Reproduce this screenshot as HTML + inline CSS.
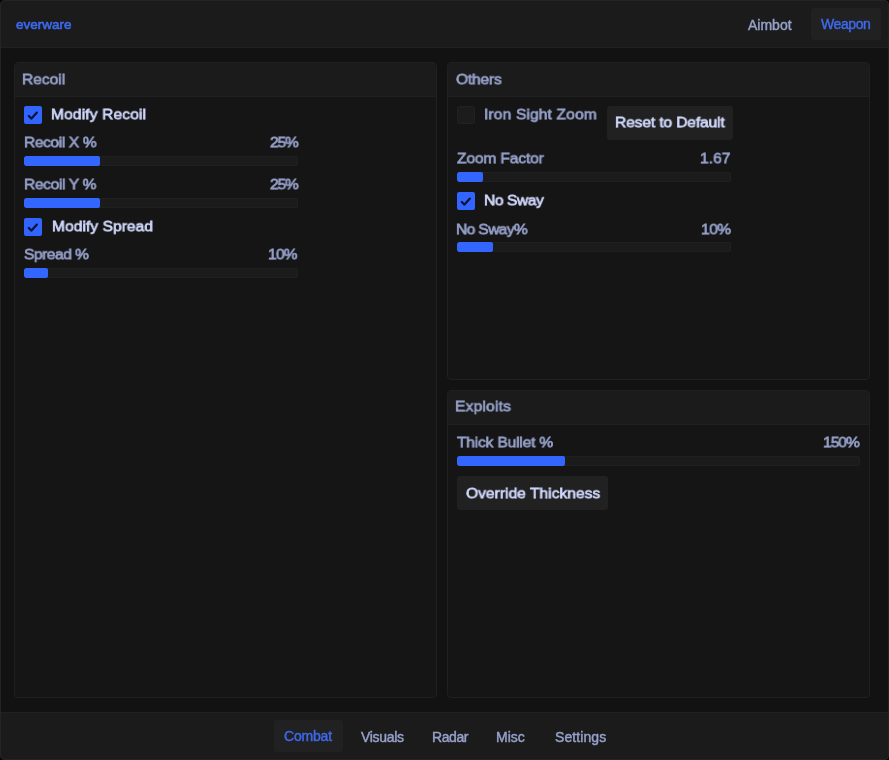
<!DOCTYPE html>
<html><head><meta charset="utf-8">
<style>
*{box-sizing:border-box;margin:0;padding:0}
html,body{width:889px;height:760px;background:#000;overflow:hidden}
body{font-family:"Liberation Sans",sans-serif;position:relative}
.r{position:absolute}
.t{position:absolute;white-space:nowrap;line-height:1;will-change:transform}
.hdrb{font-size:13.5px;color:#3d69ee;-webkit-text-stroke:0.6px #3d69ee}
.tab{font-size:14px;color:#96a1ca;-webkit-text-stroke:0.45px #96a1ca}
.tabb{font-size:14px;color:#3e69ea;-webkit-text-stroke:0.45px #3e69ea}
.ph{transform:scale(0.969,0.86);transform-origin:0 0;font-size:16px;color:#96a1ca;-webkit-text-stroke:0.8px #96a1ca}
.lbl{transform:scale(0.969,0.86);transform-origin:0 0;font-size:16px;color:#96a1ca;-webkit-text-stroke:0.8px #96a1ca}
.lbl2{transform:scale(0.969,0.86);transform-origin:0 0;font-size:16px;color:#d0d8fc;-webkit-text-stroke:0.8px #d0d8fc}
.track{position:absolute;height:10px;background:#1b1b1b;box-shadow:inset 0 0 0 1px #202020;border-radius:2px;overflow:hidden}
.fill{position:absolute;left:0;top:0;height:10px;background:#3366ff;border-radius:2px}
.cb{position:absolute;width:18px;height:18px;border-radius:2px;background:#3264ff}
.cb svg{position:absolute;left:0;top:0}
.cb.off{background:#1c1c1c;box-shadow:inset 0 0 0 1px #222222;border-radius:3px}
.btn{position:absolute;background:#212121;border-radius:3px}
.panel{position:absolute;background:#151515;border:1px solid #202020;border-radius:4px;overflow:hidden}
.ph-bg{position:absolute;left:0;top:0;right:0;height:34px;background:#1b1b1b;border-bottom:1px solid #202020}
</style></head><body>
<div class="r" style="left:0;top:0;width:889px;height:760px;background:#1b1b1b;border:1px solid #242424;border-radius:4px;overflow:hidden">
</div>
<div class="r" style="left:1px;top:47px;width:887px;height:1px;background:#212121"></div>
<div class="r" style="left:1px;top:48px;width:887px;height:664px;background:#121212"></div>
<div class="r" style="left:1px;top:712px;width:887px;height:1px;background:#212121"></div>

<div class="btn" style="left:811px;top:8px;width:70px;height:32px"></div>

<div class="panel" style="left:14px;top:62px;width:423px;height:636px"><div class="ph-bg"></div></div>
<div class="panel" style="left:447px;top:62px;width:423px;height:318px"><div class="ph-bg"></div></div>
<div class="panel" style="left:447px;top:390px;width:423px;height:308px"><div class="ph-bg"></div></div>

<div class="cb" style="left:24px;top:106px"><svg width="18" height="18" viewBox="0 0 18 18"><polyline points="4.8,10 7.5,12.6 12.9,6.6" fill="none" stroke="#0a1238" stroke-width="2.2" stroke-linecap="round" stroke-linejoin="round"/></svg></div>
<div class="track" style="left:24px;top:156px;width:274px"><div class="fill" style="width:76px"></div></div>
<div class="track" style="left:24px;top:198px;width:274px"><div class="fill" style="width:76px"></div></div>
<div class="cb" style="left:24px;top:218px"><svg width="18" height="18" viewBox="0 0 18 18"><polyline points="4.8,10 7.5,12.6 12.9,6.6" fill="none" stroke="#0a1238" stroke-width="2.2" stroke-linecap="round" stroke-linejoin="round"/></svg></div>
<div class="track" style="left:24px;top:268px;width:274px"><div class="fill" style="width:24px"></div></div>

<div class="cb off" style="left:457px;top:106px"></div>
<div class="btn" style="left:607px;top:106px;width:126px;height:34px"></div>
<div class="track" style="left:457px;top:172px;width:274px"><div class="fill" style="width:26px"></div></div>
<div class="cb" style="left:457px;top:192px"><svg width="18" height="18" viewBox="0 0 18 18"><polyline points="4.8,10 7.5,12.6 12.9,6.6" fill="none" stroke="#0a1238" stroke-width="2.2" stroke-linecap="round" stroke-linejoin="round"/></svg></div>
<div class="track" style="left:457px;top:242px;width:274px"><div class="fill" style="width:36px"></div></div>

<div class="track" style="left:457px;top:456px;width:403px"><div class="fill" style="width:108px"></div></div>
<div class="btn" style="left:457px;top:476px;width:151px;height:34px"></div>

<div class="btn" style="left:274px;top:720px;width:69px;height:32px"></div>

<div id="everware" class="t hdrb" style="left:15.50px;top:18.00px;letter-spacing:0.000px">everware</div>
<div id="aimbot" class="t tab" style="left:748.00px;top:18.00px;letter-spacing:0.000px">Aimbot</div>
<div id="weapon" class="t tabb" style="left:821.00px;top:17.00px;letter-spacing:-0.400px">Weapon</div>
<div id="recoil" class="t ph" style="left:21.60px;top:72.60px;letter-spacing:0.000px">Recoil</div>
<div id="modrec" class="t lbl2" style="left:51.35px;top:108.20px;letter-spacing:0.167px">Modify Recoil</div>
<div id="rx" class="t lbl" style="left:24.02px;top:136.40px;letter-spacing:-0.370px">Recoil X %</div>
<div id="rxv" class="t lbl" style="left:269.60px;top:136.00px;letter-spacing:-1.100px">25%</div>
<div id="ry" class="t lbl" style="left:24.02px;top:178.20px;letter-spacing:-0.333px">Recoil Y %</div>
<div id="ryv" class="t lbl" style="left:269.60px;top:178.20px;letter-spacing:-1.100px">25%</div>
<div id="modspr" class="t lbl2" style="left:52.15px;top:219.80px;letter-spacing:0.084px">Modify Spread</div>
<div id="spr" class="t lbl" style="left:23.80px;top:248.40px;letter-spacing:-0.464px">Spread %</div>
<div id="sprv" class="t lbl" style="left:268.10px;top:248.40px;letter-spacing:-0.750px">10%</div>
<div id="others" class="t ph" style="left:455.80px;top:72.60px;letter-spacing:-0.160px">Others</div>
<div id="iron" class="t lbl" style="left:484.00px;top:108.20px;letter-spacing:0.175px">Iron Sight Zoom</div>
<div id="reset" class="t lbl2" style="left:615.00px;top:116.40px;letter-spacing:-0.098px">Reset to Default</div>
<div id="zf" class="t lbl" style="left:457.10px;top:152.20px;letter-spacing:-0.100px">Zoom Factor</div>
<div id="zfv" class="t lbl" style="left:700.00px;top:152.20px;letter-spacing:0.071px">1.67</div>
<div id="nosway" class="t lbl2" style="left:484.20px;top:193.80px;letter-spacing:-0.363px">No Sway</div>
<div id="ns" class="t lbl" style="left:456.20px;top:222.80px;letter-spacing:-0.608px">No Sway%</div>
<div id="nsv" class="t lbl" style="left:700.50px;top:222.80px;letter-spacing:-0.500px">10%</div>
<div id="exploits" class="t ph" style="left:454.80px;top:400.00px;letter-spacing:0.233px">Exploits</div>
<div id="thick" class="t lbl" style="left:457.40px;top:436.40px;letter-spacing:-0.161px">Thick Bullet %</div>
<div id="thickv" class="t lbl" style="left:823.00px;top:436.40px;letter-spacing:-1.000px">150%</div>
<div id="override" class="t lbl2" style="left:465.80px;top:486.80px;letter-spacing:0.059px">Override Thickness</div>
<div id="combat" class="t tabb" style="left:284.30px;top:729.40px;letter-spacing:-0.200px">Combat</div>
<div id="visuals" class="t tab" style="left:361.40px;top:730.00px;letter-spacing:-0.304px">Visuals</div>
<div id="radar" class="t tab" style="left:432.00px;top:730.00px;letter-spacing:-0.425px">Radar</div>
<div id="misc" class="t tab" style="left:496.20px;top:730.00px;letter-spacing:0.000px">Misc</div>
<div id="settings" class="t tab" style="left:554.60px;top:730.00px;letter-spacing:0.090px">Settings</div>
</body></html>
